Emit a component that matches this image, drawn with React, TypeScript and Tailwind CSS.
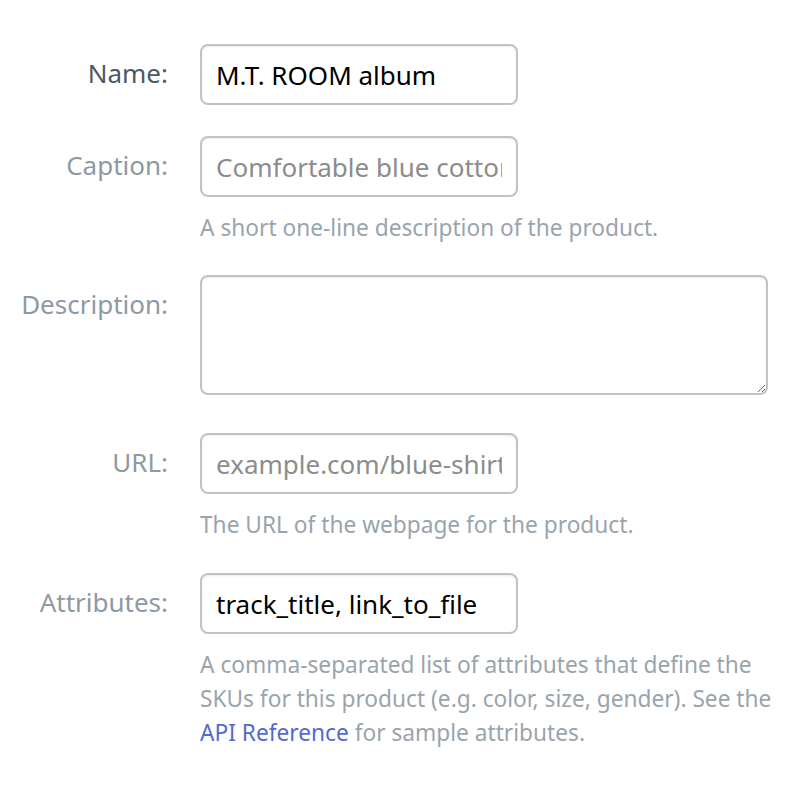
import React from 'react';

const font = { fontFamily: '"Noto Sans", "Open Sans", sans-serif' };

const Label = ({ children, dark }: { children: React.ReactNode; dark?: boolean }) => (
  <div
    className={`w-[168px] shrink-0 text-right text-[26px] leading-[58px] ${
      dark ? 'text-[#4f5760]' : 'text-[#8e99a2]'
    }`}
  >
    {children}
  </div>
);

const inputCls =
  'h-[61px] w-[318px] rounded-[8px] border-2 border-[#c2c2c2] bg-white px-[14px] text-[26px] shadow-[inset_0_1px_2px_rgba(0,0,0,0.08)] outline-none placeholder:text-[#8c8c8c]';

const Help = ({ children }: { children: React.ReactNode }) => (
  <p className="mt-[14px] w-[598px] text-[22.7px] leading-[34px] text-[#9aa4ac]">{children}</p>
);

export default function App() {
  return (
    <div className="min-h-screen bg-white pt-[44px]" style={font}>
      <div className="flex flex-col gap-[31px]">
        <div className="flex gap-[32px]">
          <Label dark>Name:</Label>
          <input className={`${inputCls} text-black`} defaultValue="M.T. ROOM album" />
        </div>

        <div className="flex gap-[32px]">
          <Label>Caption:</Label>
          <div>
            <input className={inputCls} placeholder="Comfortable blue cotton shirt" />
            <Help>A short one-line description of the product.</Help>
          </div>
        </div>

        <div className="-mt-[1px] flex gap-[32px]">
          <Label>Description:</Label>
          <textarea className="h-[120px] w-[568px] resize-y rounded-[8px] border-2 border-[#c2c2c2] bg-white px-[14px] py-[10px] text-[26px] shadow-[inset_0_1px_2px_rgba(0,0,0,0.08)] outline-none" />
        </div>

        <div className="mt-[7px] flex gap-[32px]">
          <Label>URL:</Label>
          <div>
            <input className={inputCls} placeholder="example.com/blue-shirt" />
            <Help>The URL of the webpage for the product.</Help>
          </div>
        </div>

        <div className="flex gap-[32px]">
          <Label>Attributes:</Label>
          <div>
            <input className={`${inputCls} text-black`} defaultValue="track_title, link_to_file" />
            <Help>
              A comma-separated list of attributes that define the SKUs for this product (e.g. color, size, gender). See
              the{' '}
              <a href="#" className="text-[#5469d4]">
                API Reference
              </a>{' '}
              for sample attributes.
            </Help>
          </div>
        </div>
      </div>
    </div>
  );
}
